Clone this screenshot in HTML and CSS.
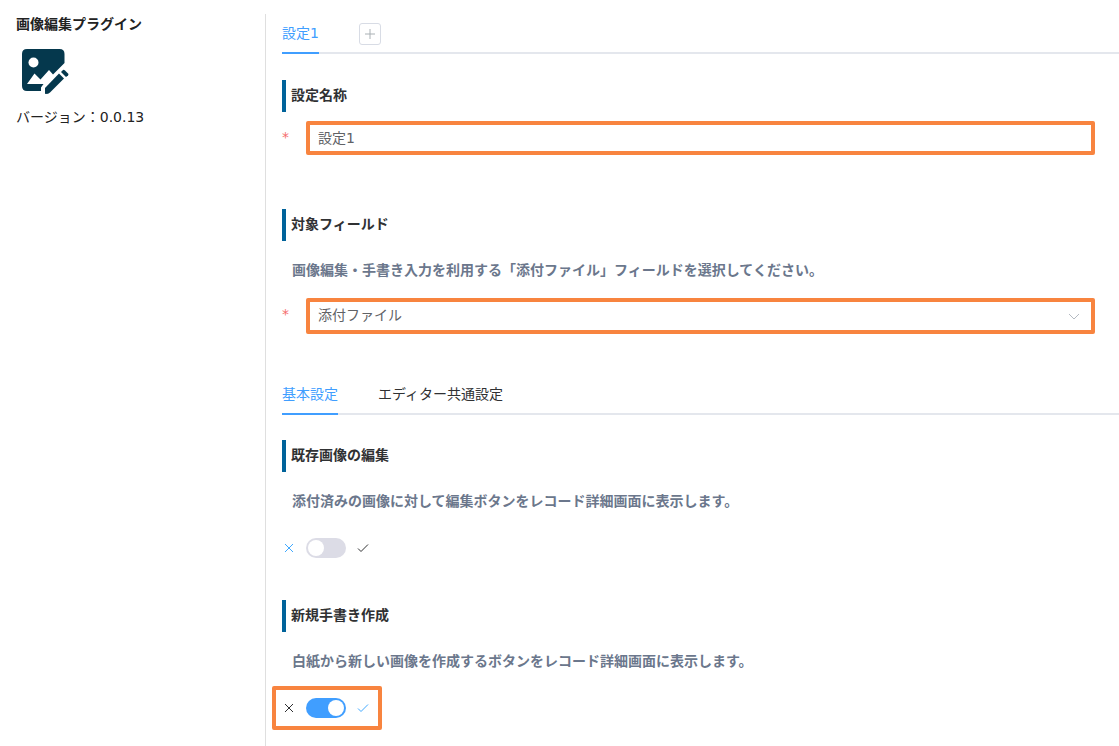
FILE: index.html
```html
<!DOCTYPE html>
<html lang="ja">
<head>
  <meta charset="UTF-8" />
  <meta name="viewport" content="width=device-width, initial-scale=1" />
  <title>画像編集プラグイン</title>
  <link rel="stylesheet" href="styles.css">
</head>
<body>
  <aside class="sidebar">
    <h1>画像編集プラグイン</h1>
    <svg class="logo" viewBox="0 0 56 54" aria-hidden="true">
      <path d="M11 5H43.500Q48.500 5 48.500 10V19L37 30.500L33 26L24.500 35.500L18.500 29.500L11 40H27.500L25 43.500V47H11Q6 47 6 42V10Q6 5 11 5Z" />
      <circle cx="17.500" cy="18.500" r="5" fill="#fff" />
      <path d="M29 44L43 29.500L48 34.500L34 48.500Q32.500 50 29.500 50Q29 50 29 49Z" />
      <path d="M45 28L47 26Q48 25.500 49 26.500L52 29.500Q53 30.500 52 31.500L50 33Z" />
    </svg>
    <p>バージョン：0.0.13</p>
  </aside>

  <main class="content">
    <nav class="tabs">
      <button type="button" class="tab active">設定1</button>
      <button type="button" class="add-btn" aria-label="設定を追加">
        <svg viewBox="0 0 12 12"><path d="M6 1V11M1 6H11" /></svg>
      </button>
    </nav>

    <section class="block name">
      <h2 id="name-title">設定名称</h2>
      <div class="field">
        <span class="required">*</span>
        <input type="text" class="control" value="設定1" aria-labelledby="name-title" />
      </div>
    </section>

    <section class="block target">
      <h2 id="target-title">対象フィールド</h2>
      <p class="desc">画像編集・手書き入力を利用する「添付ファイル」フィールドを選択してください。</p>
      <div class="field">
        <span class="required">*</span>
        <div class="select-wrap">
          <select class="control" aria-labelledby="target-title">
            <option>添付ファイル</option>
          </select>
          <svg class="arrow" viewBox="0 0 12 12"><path d="M1 4L6 9L11 4" /></svg>
        </div>
      </div>
    </section>

    <nav class="tabs">
      <button type="button" class="tab active">基本設定</button>
      <button type="button" class="tab">エディター共通設定</button>
    </nav>

    <section class="block">
      <h2 id="edit-title">既存画像の編集</h2>
      <p class="desc">添付済みの画像に対して編集ボタンをレコード詳細画面に表示します。</p>
      <div class="switch-row">
        <svg class="icon on" viewBox="0 0 14 14"><path d="M3 3L11 11M11 3L3 11" /></svg>
        <input type="checkbox" class="switch" role="switch" aria-labelledby="edit-title" />
        <svg class="icon" viewBox="0 0 14 14"><path d="M2 7.500L5 10.500L12 3.500" /></svg>
      </div>
    </section>

    <section class="block">
      <h2 id="new-title">新規手書き作成</h2>
      <p class="desc">白紙から新しい画像を作成するボタンをレコード詳細画面に表示します。</p>
      <div class="switch-row highlight">
        <svg class="icon" viewBox="0 0 14 14"><path d="M3 3L11 11M11 3L3 11" /></svg>
        <input type="checkbox" class="switch" role="switch" aria-labelledby="new-title" checked />
        <svg class="icon on" viewBox="0 0 14 14"><path d="M2 7.500L5 10.500L12 3.500" /></svg>
      </div>
    </section>
  </main>
</body>
</html>
```
FILE: styles.css
```css
* {
  box-sizing: border-box;
  margin: 0;
  padding: 0;
}

body {
  display: flex;
  min-height: 100vh;
  padding-top: 14px;
  background: #fff;
  color: #222;
  font-family: "DejaVu Sans", "Noto Sans CJK JP", sans-serif;
  font-size: 14px;
  line-height: 20px;
}

button, input, select {
  font: inherit;
}

/* left column */
.sidebar {
  flex: 0 0 265px;
  padding-left: 16px;
}

h1, h2 {
  font-size: 14px;
  font-weight: bold;
}

.logo {
  display: block;
  width: 56px;
  height: 54px;
  margin: 10px 0 9px;
  fill: #05384d;
}

/* settings */
.content {
  flex: 1;
  min-width: 0;
  padding: 0 0 16px 16px;
  border-left: 1px solid #dfdfdf;
}

.tabs {
  display: flex;
  align-items: center;
  gap: 40px;
  height: 40px;
  box-shadow: inset 0 -2px #e4e7ed;
}

.tab {
  height: 40px;
  border: none;
  border-bottom: 2px solid transparent;
  background: none;
  color: #303133;
  cursor: pointer;
}

.tab.active {
  border-color: #409eff;
  color: #409eff;
}

.add-btn {
  display: flex;
  align-items: center;
  justify-content: center;
  width: 22px;
  height: 22px;
  border: 1px solid #d8dce5;
  border-radius: 3px;
  background: #fff;
  cursor: pointer;
}

.add-btn svg {
  width: 12px;
  height: 12px;
  stroke: #a9b0b4;
}

h2 {
  padding: 5px 0 7px 5px;
  border-left: 4px solid #00639a;
  color: #303133;
}

.block {
  margin-top: 25px;
}

.block + .block {
  margin-top: 30px;
}

.block.name {
  margin-top: 26px;
}

.block.target {
  margin-top: 54px;
  margin-bottom: 41px;
}

.desc {
  margin: 19px 0 0 10px;
  color: #6b778c;
  font-weight: bold;
}

.field {
  display: flex;
  margin: 18px 24px 0 0;
}

.name .field {
  margin-top: 9px;
}

.required {
  flex: 0 0 24px;
  padding-top: 6px;
  color: #f56c6c;
}

.control {
  flex: 1;
  width: 100%;
  height: 34px;
  padding: 0 8px 2px;
  border: 4px solid #f8843f;
  border-radius: 2px;
  background: #fff;
  color: #606266;
  appearance: none;
}

.select-wrap {
  position: relative;
  flex: 1;
}

.select-wrap .control {
  display: block;
  height: 36px;
}

.arrow {
  position: absolute;
  top: 12px;
  right: 15px;
  width: 12px;
  height: 12px;
  fill: none;
  stroke: #b4bac2;
  pointer-events: none;
}

/* on / off switches */
.switch-row {
  display: flex;
  align-items: center;
  gap: 10px;
  width: 110px;
  height: 44px;
  margin: 15px 0 0 -10px;
  padding: 0 6px;
  border: 4px solid transparent;
  border-radius: 2px;
}

.switch-row.highlight {
  border-color: #f8843f;
}

.icon {
  width: 14px;
  height: 14px;
  fill: none;
  stroke: #303133;
}

.icon.on {
  stroke: #40a9ff;
}

.switch {
  display: flex;
  align-items: center;
  width: 40px;
  height: 20px;
  padding: 0 2px;
  border-radius: 10px;
  background: #dcdce6;
  appearance: none;
  cursor: pointer;
}

.switch::before {
  content: "";
  width: 16px;
  height: 16px;
  border-radius: 50%;
  background: #fff;
}

.switch:checked {
  justify-content: flex-end;
  background: #409eff;
}
```
